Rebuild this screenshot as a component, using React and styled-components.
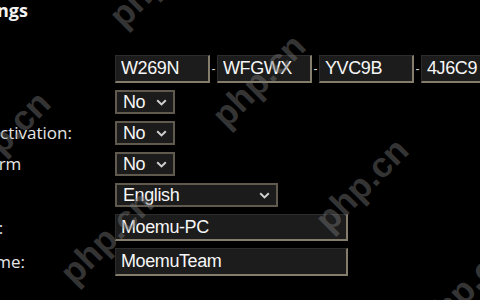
import React from "react";
import styled, { createGlobalStyle } from "styled-components";

const Global = createGlobalStyle`
  html, body { margin: 0; padding: 0; background: #000; }
  body { width: 480px; height: 300px; overflow: hidden; }
`;

const Screen = styled.div`
  position: relative;
  width: 480px;
  height: 300px;
  overflow: hidden;
  background: #000;
`;

const Panel = styled.div`
  display: flex;
  flex-direction: column;
  margin-left: -131px;
`;

const Title = styled.h1`
  margin: -2px 0 0 0;
  font-family: "Open Sans", sans-serif;
  font-weight: 700;
  font-size: 18px;
  line-height: 24px;
  color: #f2f2f2;
  white-space: nowrap;
`;

const Form = styled.div`
  display: grid;
  grid-template-columns: 246px auto;
  row-gap: 7px;
  align-items: center;
  margin-top: 33px;
`;

const Label = styled.label`
  font-family: "Open Sans", sans-serif;
  font-size: 17px;
  line-height: 20px;
  color: #e6e6e6;
  white-space: nowrap;
`;

const KeyGroup = styled.div`
  display: flex;
  align-items: center;
`;

const Sep = styled.span`
  width: 7px;
  text-align: center;
  font-family: "Liberation Sans", sans-serif;
  font-size: 12px;
  line-height: 12px;
  color: #d8d8d8;
`;

const TextBox = styled.input`
  box-sizing: border-box;
  width: ${(p) => p.$w}px;
  height: ${(p) => p.$h}px;
  margin: 0;
  padding: 0 4px 0 5px;
  flex: none;
  background: #1c1c1c;
  color: #f6f6f6;
  border-style: solid;
  border-width: 1px 2px 2px 1px;
  border-color: #2c2c2c #847d6b #847d6b #2c2c2c;
  border-radius: 0;
  outline: none;
  font-family: "Liberation Sans", Arial, sans-serif;
  font-size: 18px;
  letter-spacing: -0.4px;
`;

const SelectBox = styled.div`
  box-sizing: border-box;
  width: ${(p) => p.$w}px;
  height: 24px;
  display: flex;
  align-items: center;
  justify-content: space-between;
  padding: 0 6px 0 6px;
  background: #1b1b1b;
  border: 2px solid #5f594e;
  color: #f6f6f6;
  font-family: "Liberation Sans", Arial, sans-serif;
  font-size: 18px;
  letter-spacing: -0.4px;
  justify-self: start;
`;

const Chevron = () => (
  <svg width="11" height="7" viewBox="0 0 11 7" aria-hidden="true">
    <path d="M1.2 1.2 L5.5 5.4 L9.8 1.2" fill="none" stroke="#d0d0d0" strokeWidth="2" />
  </svg>
);

const Watermark = styled.span`
  position: absolute;
  left: ${(p) => p.$x}px;
  top: ${(p) => p.$y - 35}px;
  font-family: "Liberation Sans", Arial, sans-serif;
  font-weight: 700;
  font-size: 35px;
  line-height: 35px;
  color: rgba(120, 120, 120, 0.45);
  transform: rotate(-45deg);
  transform-origin: 0 100%;
  white-space: nowrap;
  pointer-events: none;
`;

const marks = [
  [127, 33],
  [230, 133],
  [333, 237],
  [436, 341],
  [-25, 190],
  [78, 290],
];

const keyParts = ["W269N", "WFGWX", "YVC9B", "4J6C9"];

export default function App() {
  return (
    <Screen>
      <Global />
      <Panel>
        <Title>Windows Settings</Title>
        <Form>
          <Label>Product key:</Label>
          <KeyGroup>
            {keyParts.map((k, i) => (
              <React.Fragment key={k}>
                {i > 0 && <Sep>-</Sep>}
                <TextBox $w={95} $h={28} readOnly value={k} />
              </React.Fragment>
            ))}
          </KeyGroup>

          <Label>Skip OOBE:</Label>
          <SelectBox $w={60} role="combobox">
            <span>No</span>
            <Chevron />
          </SelectBox>

          <Label>Skip automatic activation:</Label>
          <SelectBox $w={60} role="combobox">
            <span>No</span>
            <Chevron />
          </SelectBox>

          <Label>Skip the EULA form</Label>
          <SelectBox $w={60} role="combobox">
            <span>No</span>
            <Chevron />
          </SelectBox>

          <Label>Language:</Label>
          <SelectBox $w={163} role="combobox">
            <span>English</span>
            <Chevron />
          </SelectBox>

          <Label>Computer name:</Label>
          <TextBox $w={233} $h={27} readOnly value="Moemu-PC" />

          <Label>Organization name:</Label>
          <TextBox $w={233} $h={28} readOnly value="MoemuTeam" />
        </Form>
      </Panel>
      {marks.map(([x, y]) => (
        <Watermark key={`${x}-${y}`} $x={x} $y={y}>
          php.cn
        </Watermark>
      ))}
    </Screen>
  );
}
